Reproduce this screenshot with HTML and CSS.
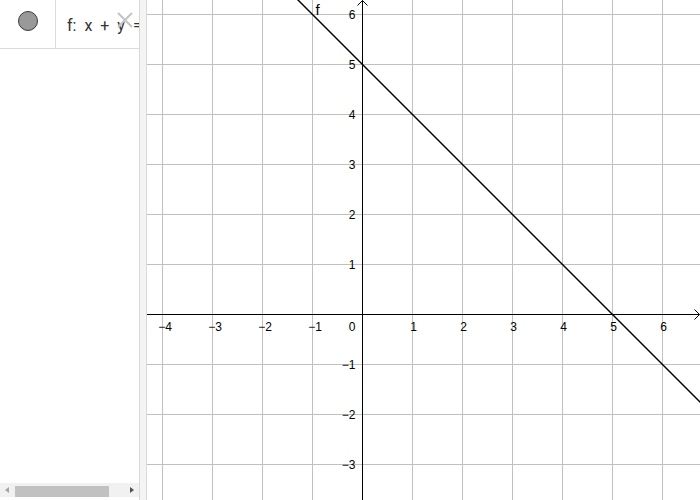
FILE: index.html
```html
<!DOCTYPE html>
<html>
<head>
<meta charset="utf-8">
<link rel="stylesheet" href="styles.css">
</head>
<body>
<div class="app">
  <div class="algebra">
    <div class="row">
      <div class="marble-cell"><div class="marble"></div></div>
      <div class="formula">f: x + y = 5</div>
      <svg class="close" width="18" height="18" viewBox="0 0 18 18"><path d="M2 2 L16 16 M16 2 L2 16" stroke="#c4c4c4" stroke-width="2" fill="none"/></svg>
    </div>
    <div class="spacer"></div>
    <div class="hscroll">
      <div class="arrow-left"></div>
      <div class="track"><div class="thumb"></div></div>
      <div class="arrow-right"></div>
    </div>
  </div>
  <div class="splitter"></div>
  <div class="graphics">
    <svg class="plot" width="553" height="500" viewBox="147 0 553 500">
      <g class="grid">
        <path d="M162.5 0V500M212.5 0V500M262.5 0V500M312.5 0V500M412.5 0V500M462.5 0V500M512.5 0V500M562.5 0V500M612.5 0V500M662.5 0V500"/>
        <path d="M147 14.5H700M147 64.5H700M147 114.5H700M147 164.5H700M147 214.5H700M147 264.5H700M147 364.5H700M147 414.5H700M147 464.5H700"/>
      </g>
      <g class="axes">
        <path d="M147 314.5H699.5M362.5 500V0.5"/>
        <path d="M694.5 309.5L699.5 314.5L694.5 319.5M357.5 5.5L362.5 0.5L367.5 5.5"/>
      </g>
      <g class="xlabels">
        <text x="165" y="330.5">−4</text>
        <text x="215" y="330.5">−3</text>
        <text x="265" y="330.5">−2</text>
        <text x="315" y="330.5">−1</text>
        <text x="352" y="330.5">0</text>
        <text x="413.5" y="330.5">1</text>
        <text x="463.5" y="330.5">2</text>
        <text x="513.5" y="330.5">3</text>
        <text x="563.5" y="330.5">4</text>
        <text x="613.5" y="330.5">5</text>
        <text x="663.5" y="330.5">6</text>
      </g>
      <g class="ylabels">
        <text x="355.5" y="18.8">6</text>
        <text x="355.5" y="68.8">5</text>
        <text x="355.5" y="118.8">4</text>
        <text x="355.5" y="168.8">3</text>
        <text x="355.5" y="218.8">2</text>
        <text x="355.5" y="268.8">1</text>
        <text x="355.5" y="368.8">−1</text>
        <text x="355.5" y="418.8">−2</text>
        <text x="355.5" y="468.8">−3</text>
      </g>
      <path class="fline" d="M296 -2L702 404"/>
      <text class="flabel" x="315.5" y="15">f</text>
    </svg>
  </div>
</div>
</body>
</html>
```
FILE: styles.css
```css
html, body {
  margin: 0;
  padding: 0;
  background: #fff;
}
.app {
  display: flex;
  width: 700px;
  height: 500px;
  overflow: hidden;
}
.algebra {
  width: 139px;
  border-right: 1px solid #d9d9d9;
  display: flex;
  flex-direction: column;
  background: #fff;
}
.row {
  position: relative;
  display: flex;
  height: 48px;
  border-bottom: 1px solid #dcdcdc;
  overflow: hidden;
}
.marble-cell {
  width: 56px;
  flex: none;
  border-right: 1px solid #dcdcdc;
  display: flex;
  justify-content: center;
  padding-top: 11px;
  box-sizing: border-box;
}
.marble {
  width: 20px;
  height: 20px;
  box-sizing: border-box;
  border-radius: 50%;
  border: 1px solid #3a3a3a;
  background: #999;
}
.formula {
  padding: 16px 0 0 11px;
  font-family: Roboto, "Liberation Sans", sans-serif;
  font-size: 16px;
  line-height: 20px;
  color: #333;
  white-space: nowrap;
  word-spacing: 4px;
}
.close {
  position: absolute;
  left: 116px;
  top: 11px;
}
.spacer {
  flex: 1;
}
.hscroll {
  height: 14px;
  margin-bottom: 3px;
  background: #f1f1f1;
  display: flex;
  align-items: center;
}
.arrow-left {
  width: 0;
  height: 0;
  margin-left: 5px;
  border-top: 3.5px solid transparent;
  border-bottom: 3.5px solid transparent;
  border-right: 4px solid #a3a3a3;
}
.track {
  flex: 1;
  height: 11px;
  padding-left: 6px;
  margin-top: 2px;
}
.thumb {
  width: 94px;
  height: 11px;
  background: #c1c1c1;
}
.arrow-right {
  width: 0;
  height: 0;
  margin-right: 5px;
  border-top: 3.5px solid transparent;
  border-bottom: 3.5px solid transparent;
  border-left: 4px solid #505050;
}
.splitter {
  width: 6px;
  background: #f4f4f4;
  border-right: 1px solid #d9d9d9;
}
.graphics {
  flex: 1;
  position: relative;
  overflow: hidden;
}
.plot {
  display: block;
}
.grid path {
  stroke: #c0c0c0;
  stroke-width: 1;
  fill: none;
}
.axes path {
  stroke: #000;
  stroke-width: 1;
  fill: none;
}
.xlabels text, .ylabels text {
  font-family: "Liberation Sans", Arial, sans-serif;
  font-size: 12px;
  fill: #000;
}
.xlabels text {
  text-anchor: middle;
}
.ylabels text {
  text-anchor: end;
}
.fline {
  stroke: #000;
  stroke-width: 1.4;
  fill: none;
}
.flabel {
  font-family: "Liberation Sans", Arial, sans-serif;
  font-size: 15px;
  fill: #000;
}
```
